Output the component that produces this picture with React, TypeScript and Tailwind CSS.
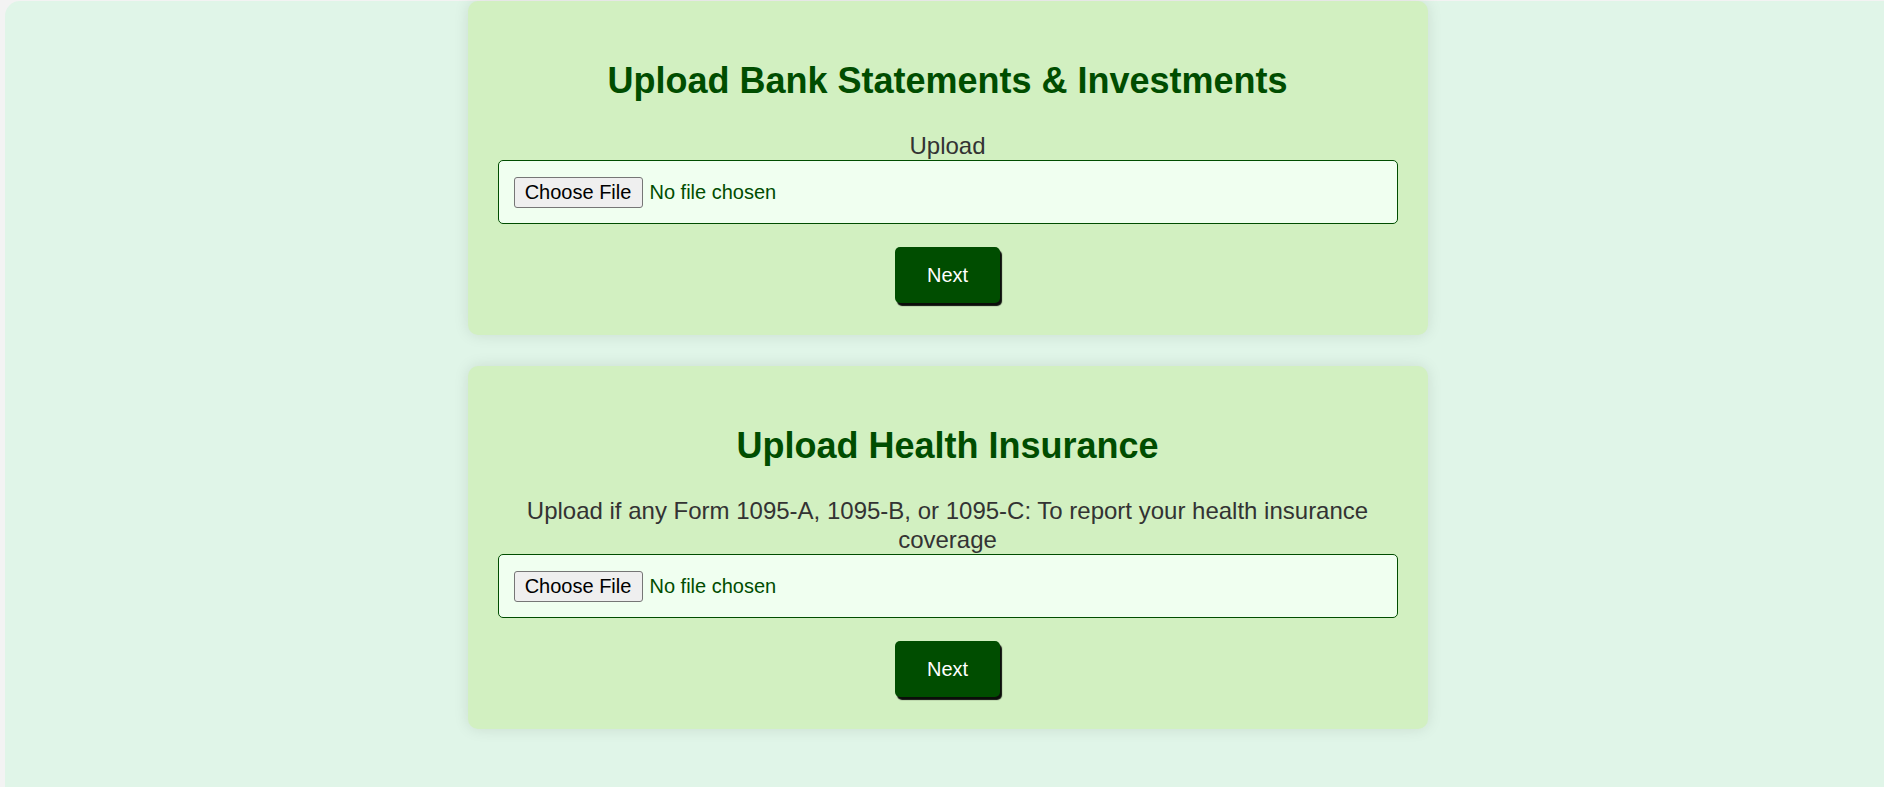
const font = { fontFamily: '"Liberation Sans", Arial, sans-serif' };

function UploadCard(props: { title: string; label: string }) {
  return (
    <div className="w-[960px] rounded-[10px] bg-[#d2f0c1] px-[30px] pt-[30px] pb-[32px] shadow-[0_0_15px_rgba(0,0,0,0.1)] flex flex-col items-center text-center">
      <h2 className="mt-[29px] mb-[30px] text-[36px] leading-[41px] font-bold text-[#004d00]">
        {props.title}
      </h2>
      <label className="text-[24px] leading-[29px] text-[#333333] px-[20px]">{props.label}</label>
      <div className="w-full h-[64px] flex items-center px-[15px] rounded-[5px] border border-[#004d00] bg-[#f0fff0]">
        <span className="h-[31px] w-[129px] flex items-center justify-center rounded-[3px] border border-[#767676] bg-[#efefef] text-[20px] text-black">
          Choose File
        </span>
        <span className="ml-[7px] text-[20px] text-[#004d00]">No file chosen</span>
      </div>
      <button className="mt-[23px] w-[105px] h-[56px] rounded-[5px] bg-[#004d00] text-white text-[20px] shadow-[2px_3px_1px_rgba(0,0,0,0.95)]">
        Next
      </button>
    </div>
  );
}

export default function App() {
  return (
    <div style={font} className="h-[787px] overflow-hidden bg-[#f3f3f3] pl-[5px] pt-[1px]">
      <div className="h-full rounded-tl-[15px] bg-[#e0f5e8] pl-[6px] flex flex-col items-center gap-[31px]">
        <UploadCard title="Upload Bank Statements & Investments" label="Upload" />
        <UploadCard
          title="Upload Health Insurance"
          label="Upload if any Form 1095-A, 1095-B, or 1095-C: To report your health insurance coverage"
        />
      </div>
    </div>
  );
}
